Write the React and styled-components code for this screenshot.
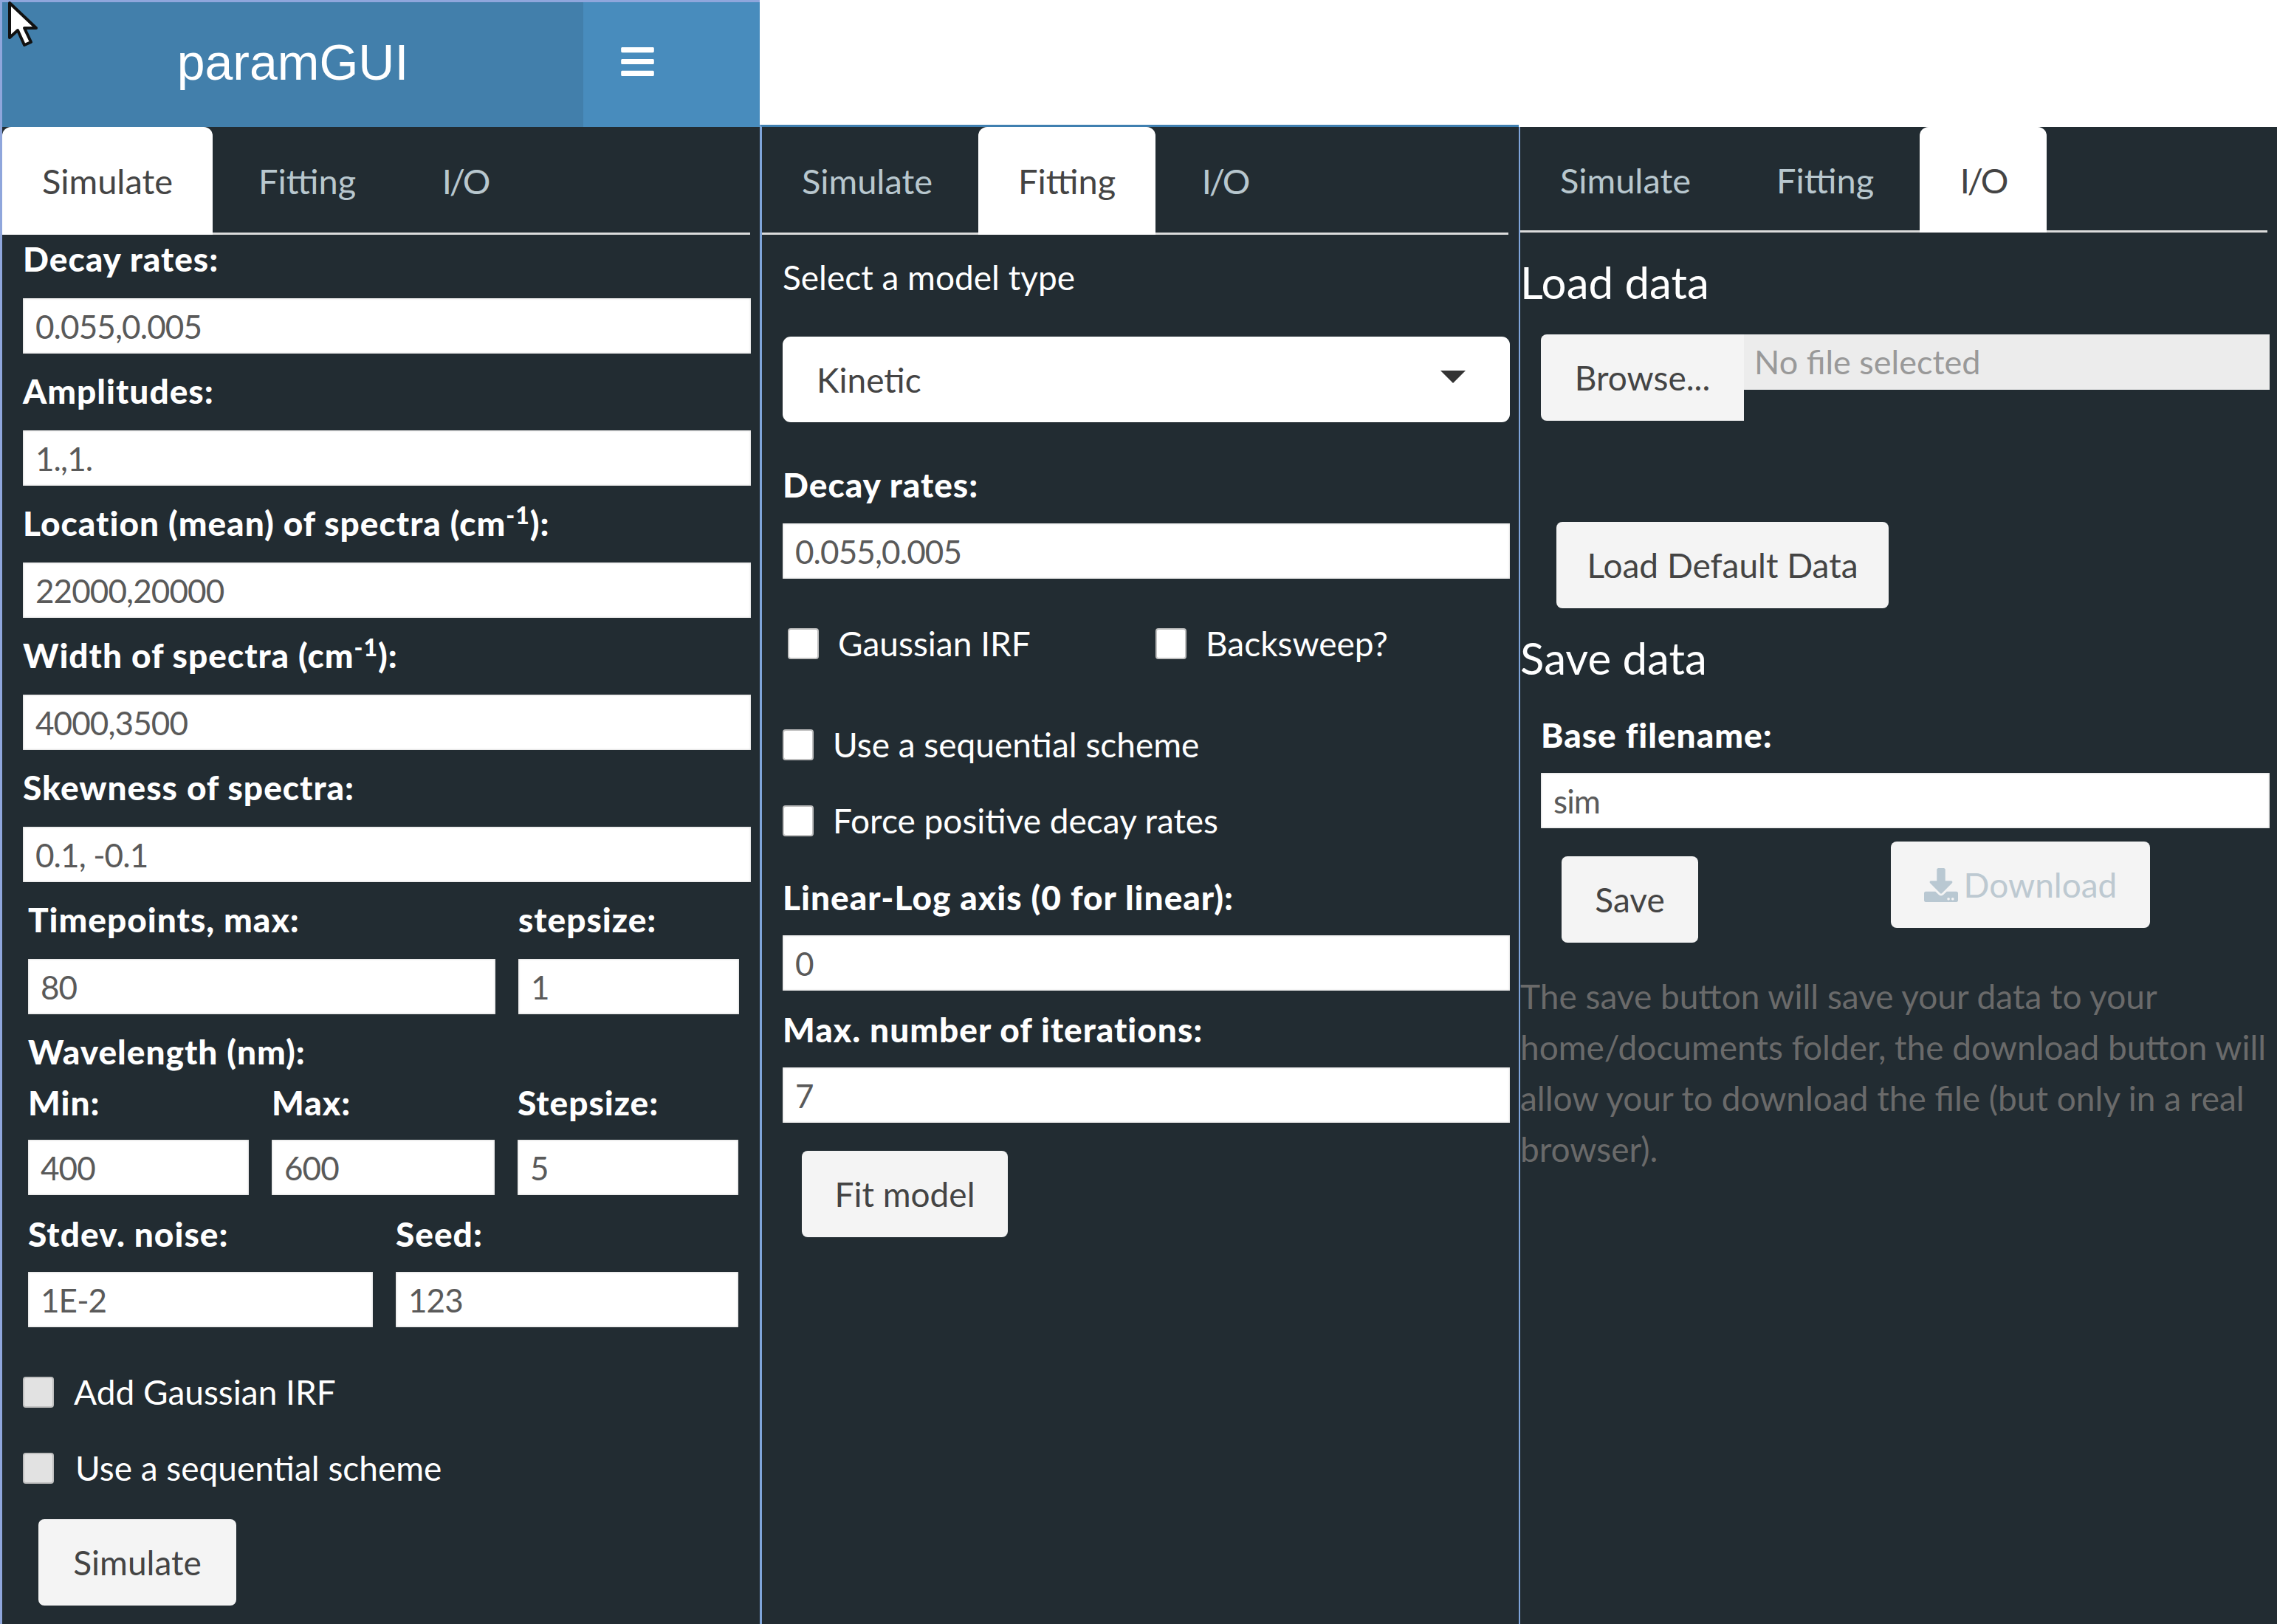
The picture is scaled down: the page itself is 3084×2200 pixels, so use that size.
import React from "react";
import styled, { createGlobalStyle } from "styled-components";
import { FaBars, FaDownload } from "react-icons/fa";

const Global = createGlobalStyle`
  html, body { margin: 0; padding: 0; background: #fff; }
  body { font-family: Lato, "Noto Sans", sans-serif; width: 3084px; height: 2200px; overflow: hidden; }
  * { box-sizing: border-box; }
`;

const Page = styled.div`
  display: grid;
  grid-template-columns: 1029px 1028px 1027px;
  height: 2200px;
  position: relative;
`;
const Column = styled.section`
  display: flex;
  flex-direction: column;
  margin-top: ${(p) => p.$top || 0}px;
  border-left: ${(p) => p.$edge || 3}px solid ${(p) => p.$edgeColor || "#7fa5da"};
  border-top: ${(p) => (p.$line ? "3px solid #3f7fb0" : "none")};
  background: #222c32;
  color: #fff;
  min-width: 0;
`;
const Header = styled.header`
  display: flex;
  height: 169px;
  flex: none;
`;
const TopRule = styled.div`
  height: 3px;
  background: #8fa6dc;
  flex: none;
`;
const Logo = styled.div`
  width: 787px;
  background: #427fab;
  display: flex;
  align-items: center;
  justify-content: center;
  font-family: "Liberation Sans", Arial, sans-serif;
  font-size: 68px;
  color: #fff;
  padding-bottom: 8px;
`;
const Toggle = styled.div`
  flex: 1;
  background: #488cbd;
  display: flex;
  align-items: center;
  color: #fff;
  padding: 0 0 8px 48px;
  font-size: 51px;
`;
const Tabs = styled.nav`
  display: flex;
  height: ${(p) => p.$h}px;
  margin-right: ${(p) => p.$mr || 13}px;
  border-bottom: 3px solid #dcdcdc;
  flex: none;
`;
const Tab = styled.div`
  width: ${(p) => p.$w}px;
  height: ${(p) => p.$h}px;
  margin-right: 8px;
  display: flex;
  align-items: center;
  justify-content: center;
  font-size: 47px;
  letter-spacing: ${(p) => p.$ls || 0}px;
  border-radius: 12px 12px 0 0;
  color: ${(p) => (p.$active ? "#444" : "#b8c7ce")};
  background: ${(p) => (p.$active ? "#fff" : "transparent")};
`;
const Body = styled.div`
  padding: ${(p) => p.$pt ?? 7}px ${(p) => p.$pr ?? 12}px 0 ${(p) => p.$pl ?? 28}px;
  display: flex;
  flex-direction: column;
  flex: 1;
`;
const Field = styled.div`
  margin: ${(p) => p.$mt || 0}px 0 ${(p) => p.$mb ?? 25}px ${(p) => p.$ml || 0}px;
  min-width: 0;
`;
const Label = styled.label`
  display: block;
  font-weight: ${(p) => (p.$plain ? 400 : 900)};
  font-size: 46px;
  line-height: 52px;
  letter-spacing: ${(p) => (p.$plain ? 0 : 1)}px;
  white-space: nowrap;
  margin-bottom: ${(p) => p.$gap ?? 25}px;
  color: #fff;
  sup { font-size: 32px; line-height: 0; }
`;
const Input = styled.input`
  display: block;
  width: 100%;
  height: 75px;
  border: 0;
  border-radius: 0;
  outline: 0;
  padding: 0 17px;
  font-family: Lato, "Noto Sans", sans-serif;
  font-size: 44px;
  letter-spacing: -0.9px;
  color: #5a5a5a;
  background: #fff;
  box-shadow: inset 0 0 3px rgba(0, 0, 0, 0.25);
`;
const Row = styled.div`
  display: grid;
  grid-template-columns: ${(p) => p.$cols};
  column-gap: 31px;
  padding-left: ${(p) => p.$pl || 7}px;
`;
const Heading = styled.div`
  font-weight: 900;
  font-size: 46px;
  line-height: 52px;
  letter-spacing: 1px;
  padding-left: 7px;
  margin-bottom: 17px;
`;
const CheckRow = styled.label`
  display: flex;
  align-items: center;
  height: 43px;
  font-size: 46px;
  color: #fff;
  white-space: nowrap;
  margin-top: ${(p) => p.$mt || 0}px;
  margin-left: ${(p) => p.$ml || 0}px;
`;
const Check = styled.input.attrs({ type: "checkbox" })`
  appearance: none;
  width: 42px;
  height: 42px;
  margin: 0 ${(p) => p.$gap || 26}px 0 0;
  flex: none;
  border: 2px solid #c0c0c0;
  border-radius: 4px;
  background: ${(p) => p.$bg || "#fff"};
`;
const CheckPair = styled.div`
  display: grid;
  grid-template-columns: 498px 1fr;
  margin-left: 7px;
`;
const Button = styled.button`
  display: flex;
  align-items: center;
  justify-content: center;
  gap: 8px;
  width: ${(p) => p.$w}px;
  height: ${(p) => p.$h || 117}px;
  flex: none;
  margin: ${(p) => p.$mt || 0}px 0 0 ${(p) => p.$ml || 0}px;
  border: 0;
  border-radius: ${(p) => p.$radius || "8px"};
  background: #f4f4f4;
  color: ${(p) => p.$color || "#444"};
  font-family: Lato, "Noto Sans", sans-serif;
  font-size: 46px;
  padding: 0;
`;
const Select = styled.div`
  display: flex;
  align-items: center;
  justify-content: space-between;
  height: 116px;
  background: #fff;
  color: #444;
  border-radius: 11px;
  padding: 0 60px 0 46px;
  font-size: 46px;
  margin-bottom: 59px;
`;
const Caret = styled.span`
  width: 0;
  height: 0;
  margin-top: -8px;
  border-left: 17px solid transparent;
  border-right: 17px solid transparent;
  border-top: 17px solid #333;
`;
const Title = styled.h3`
  margin: ${(p) => p.$mt || 0}px 0 ${(p) => p.$mb || 0}px;
  font-weight: 400;
  font-size: 60px;
  line-height: 70px;
  color: #fff;
`;
const FileRow = styled.div`
  display: flex;
  align-items: flex-start;
  margin-left: 28px;
`;
const FileName = styled.div`
  flex: 1;
  height: 75px;
  background: #ececec;
  color: #999;
  font-size: 45px;
  line-height: 75px;
  padding-left: 14px;
  white-space: nowrap;
`;
const ButtonPair = styled.div`
  display: flex;
  align-items: flex-start;
`;
const Note = styled.p`
  margin: 38px 0 0;
  font-size: 46px;
  line-height: 69px;
  color: #6a6a6a;
  white-space: nowrap;
`;
const Spacer = styled.div`
  height: ${(p) => p.$h}px;
  flex: none;
`;
const Cursor = styled.svg`
  position: absolute;
  left: 10px;
  top: 1px;
  width: 44px;
  height: 64px;
`;

const TABS = [
  { name: "Simulate", w: 285 },
  { name: "Fitting", w: 240 },
  { name: "I/O", w: 172, ls: -3 },
];

const TabBar = ({ active, h = 146, mr }) => (
  <Tabs $h={h} $mr={mr}>
    {TABS.map((t) => (
      <Tab key={t.name} $h={h} $w={t.w} $ls={t.ls} $active={t.name === active}>
        {t.name}
      </Tab>
    ))}
  </Tabs>
);

const F = ({ label, value, gap = 27, mb, ml }) => (
  <Field $mb={mb} $ml={ml}>
    <Label $gap={gap}>{label}</Label>
    <Input readOnly value={value} />
  </Field>
);

export default function App() {
  return (
    <Page>
      <Global />
      <Column $edgeColor="#8fa6dc">
        <TopRule />
        <Header>
          <Logo>paramGUI</Logo>
          <Toggle>
            <FaBars />
          </Toggle>
        </Header>
        <TabBar active="Simulate" />
        <Body>
          <F label="Decay rates:" value="0.055,0.005" />
          <F label="Amplitudes:" value="1.,1." />
          <F label={<>Location (mean) of spectra (cm<sup>-1</sup>):</>} value="22000,20000" />
          <F label={<>Width of spectra (cm<sup>-1</sup>):</>} value="4000,3500" />
          <F label="Skewness of spectra:" value="0.1, -0.1" />
          <Row $cols="633px 299px">
            <F label="Timepoints, max:" value="80" />
            <F label="stepsize:" value="1" />
          </Row>
          <Heading>Wavelength (nm):</Heading>
          <Row $cols="299px 302px 299px">
            <F label="Min:" value="400" gap={24} mb={27} />
            <F label="Max:" value="600" gap={24} mb={27} />
            <F label="Stepsize:" value="5" gap={24} mb={27} />
          </Row>
          <Row $cols="467px 464px">
            <F label="Stdev. noise:" value="1E-2" gap={25} mb={66} />
            <F label="Seed:" value="123" gap={25} mb={66} />
          </Row>
          <CheckRow>
            <Check $bg="#e2e2e2" $gap={27} />
            Add Gaussian IRF
          </CheckRow>
          <CheckRow $mt={60}>
            <Check $bg="#e2e2e2" $gap={29} />
            Use a sequential scheme
          </CheckRow>
          <Button $w={268} $ml={21} $mt={48}>Simulate</Button>
        </Body>
      </Column>

      <Column $top={169} $line>
        <TabBar active="Fitting" mr={14} />
        <Body $pt={32} $pl={28} $pr={12}>
          <Label $plain $gap={54}>Select a model type</Label>
          <Select>
            Kinetic
            <Caret />
          </Select>
          <F label="Decay rates:" value="0.055,0.005" gap={26} mb={66} />
          <CheckPair>
            <CheckRow>
              <Check />
              Gaussian IRF
            </CheckRow>
            <CheckRow>
              <Check />
              Backsweep?
            </CheckRow>
          </CheckPair>
          <CheckRow $mt={94}>
            <Check />
            Use a sequential scheme
          </CheckRow>
          <CheckRow $mt={60}>
            <Check />
            Force positive decay rates
          </CheckRow>
          <Spacer $h={57} />
          <F label="Linear-Log axis (0 for linear):" value="0" gap={25} mb={27} />
          <F label="Max. number of iterations:" value="7" gap={25} mb={0} />
          <Button $w={279} $ml={26} $mt={38}>Fit model</Button>
        </Body>
      </Column>

      <Column $top={172} $edge={2}>
        <TabBar active="I/O" h={143} />
        <Body $pt={32} $pl={0} $pr={10}>
          <Title $mb={36}>Load data</Title>
          <FileRow>
            <Button $w={275} $radius="8px 0 0 8px">Browse...</Button>
            <FileName>No file selected</FileName>
          </FileRow>
          <Button $w={450} $ml={49} $mt={137}>Load Default Data</Button>
          <Title $mt={32} $mb={44}>Save data</Title>
          <Field $ml={28} $mb={0}>
            <Label $gap={25}>Base filename:</Label>
            <Input readOnly value="sim" />
          </Field>
          <ButtonPair>
            <Button $w={185} $ml={56} $mt={38}>Save</Button>
            <Button $w={351} $ml={261} $mt={18} $color="#bdc9d1">
              <FaDownload color="#b9c8d2" />
              Download
            </Button>
          </ButtonPair>
          <Note>
            The save button will save your data to your
            <br />
            home/documents folder, the download button will
            <br />
            allow your to download the file (but only in a real
            <br />
            browser).
          </Note>
        </Body>
      </Column>

      <Cursor viewBox="0 0 44 64">
        <path d="M3 3 L3 50 L14 40 L23 60 L32 56 L23 37 L39 37 Z" fill="#fff" stroke="#111" strokeWidth="4" strokeLinejoin="round" />
      </Cursor>
    </Page>
  );
}
